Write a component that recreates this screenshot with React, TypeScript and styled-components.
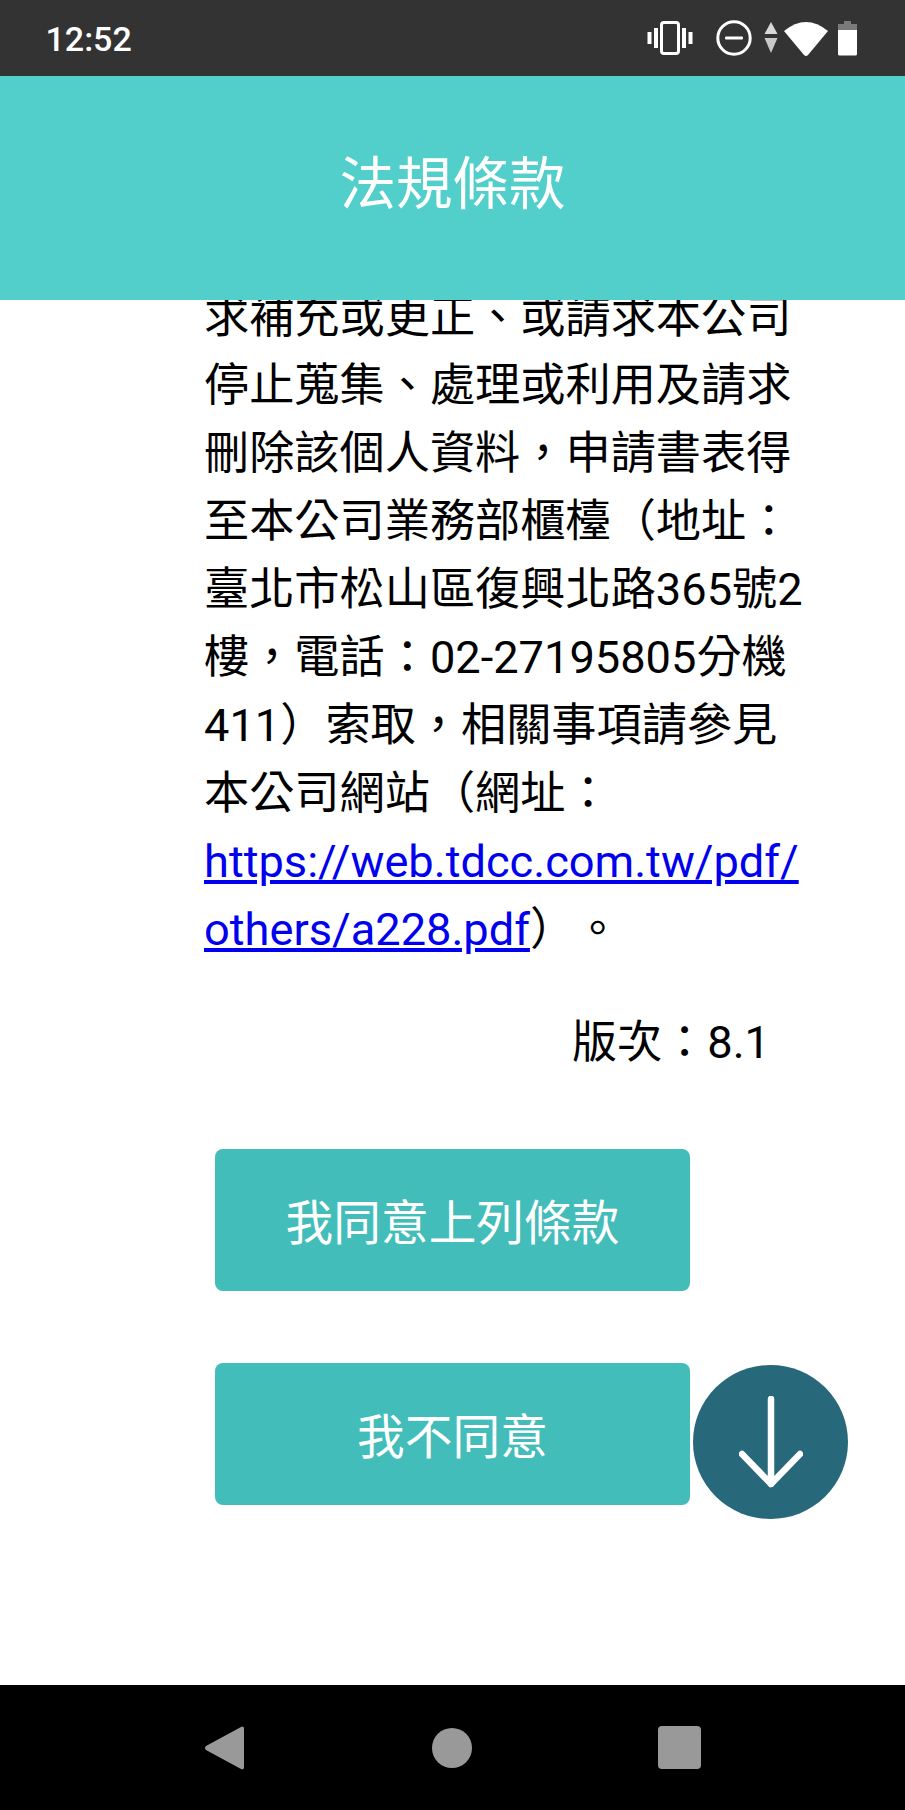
import React from "react";
import styled, { createGlobalStyle } from "styled-components";

const Global = createGlobalStyle`
  html, body { margin: 0; padding: 0; background: #fff; }
  body { font-family: Roboto, "Noto Sans CJK TC", sans-serif; }
`;

const Screen = styled.div`
  position: relative;
  width: 905px;
  height: 1810px;
  display: flex;
  flex-direction: column;
  overflow: hidden;
  background: #fff;
  text-spacing-trim: space-all;
`;

const StatusBar = styled.div`
  height: 76px;
  flex: none;
  display: flex;
  align-items: center;
  justify-content: space-between;
  padding: 0 47px 0 45.5px;
  background: #333333;
  color: #fff;
`;

const Clock = styled.span`
  font-size: 34px;
  font-weight: 500;
  line-height: 76px;
  padding-top: 1px;
`;

const StatusIcons = styled.div`
  display: flex;
  align-items: center;
`;

const StatusSvg = styled.svg<{ $gap?: number }>`
  display: block;
  margin-left: ${(p) => p.$gap ?? 0}px;
`;

const Header = styled.header`
  height: 224px;
  flex: none;
  display: flex;
  align-items: center;
  justify-content: center;
  padding-bottom: 18px;
  box-sizing: border-box;
  position: relative;
  z-index: 1;
  background: #53cfcb;
  color: #fff;
  font-size: 56.5px;
`;

const Main = styled.main`
  flex: 1;
  min-height: 0;
  overflow: hidden;
  padding-left: 204px;
`;

const Article = styled.div`
  width: 601px;
  margin-top: -16px;
  font-size: 45.2px;
  line-height: 68px;
  color: #000;
`;

const Paragraph = styled.p`
  margin: 0;
`;

const Link = styled.a`
  color: #0000ee;
  text-decoration: underline;
`;

const Version = styled.p`
  margin: 45px 35px 0 0;
  text-align: right;
`;

const Buttons = styled.div`
  margin-top: 72px;
  margin-left: 11px;
  display: flex;
  flex-direction: column;
  gap: 72px;
`;

const ActionButton = styled.button`
  width: 475px;
  height: 142px;
  padding: 0 0 2px;
  border: 0;
  border-radius: 8px;
  background: #43bdb9;
  color: #fff;
  font-family: inherit;
  font-size: 47.7px;
`;

const ScrollButton = styled.button`
  position: absolute;
  left: 693px;
  top: 1365px;
  width: 155px;
  height: 154px;
  padding: 0;
  border: 0;
  border-radius: 50%;
  background: #27697a;
  display: flex;
  align-items: center;
  justify-content: center;
`;

const NavBar = styled.nav`
  height: 125px;
  flex: none;
  display: grid;
  grid-template-columns: 204px 40px 188px 40px 186px 43px;
  align-items: center;
  background: #000;
`;

const NavBack = styled.svg`
  grid-column: 2;
  display: block;
`;

const NavHome = styled.span`
  grid-column: 4;
  width: 40px;
  height: 40px;
  border-radius: 50%;
  background: #999;
`;

const NavRecent = styled.span`
  grid-column: 6;
  width: 43px;
  height: 43px;
  border-radius: 4px;
  background: #999;
`;

export default function App() {
  return (
    <Screen lang="zh-TW">
      <Global />
      <StatusBar>
        <Clock>12:52</Clock>
        <StatusIcons>
          <StatusSvg width="46" height="34" viewBox="0 0 46 34">
            <rect x="0.5" y="11" width="4" height="12" fill="#fff" />
            <rect x="7" y="7" width="4" height="20" fill="#fff" />
            <rect x="35" y="7" width="4" height="20" fill="#fff" />
            <rect x="41.5" y="11" width="4" height="12" fill="#fff" />
            <rect x="14.5" y="1.5" width="17" height="31" rx="2.5" fill="none" stroke="#fff" strokeWidth="3" />
          </StatusSvg>
          <StatusSvg $gap={23} width="36" height="36" viewBox="0 0 36 36">
            <circle cx="18" cy="18" r="16.2" fill="none" stroke="#fff" strokeWidth="3" />
            <rect x="9" y="16.5" width="18" height="3" rx="1" fill="#fff" />
          </StatusSvg>
          <StatusSvg $gap={12} width="14" height="32" viewBox="0 0 14 32">
            <path d="M7 0 L13.5 12 H0.5 Z" fill="#d8d8d8" />
            <path d="M7 31 L13.5 16 H0.5 Z" fill="#c8c8c8" />
          </StatusSvg>
          <StatusSvg $gap={6} width="44" height="37" viewBox="0 0 44 37">
            <path d="M0 11 Q22 -7 44 11 L24 35 Q22 37 20 35 Z" fill="#fff" />
          </StatusSvg>
          <StatusSvg $gap={9} width="21" height="36" viewBox="0 0 21 36">
            <path d="M7 1 H14 V4 H20 V10 H1 V4 H7 Z" fill="#7a7a7a" />
            <path d="M1 10 H20 V34 Q20 35.5 18.5 35.5 H2.5 Q1 35.5 1 34 Z" fill="#fff" />
          </StatusSvg>
        </StatusIcons>
      </StatusBar>

      <Header>法規條款</Header>

      <Main>
        <Article>
          <Paragraph>
            求補充或更正、或請求本公司停止蒐集、處理或利用及請求刪除該個人資料，申請書表得至本公司業務部櫃檯（地址：臺北市松山區復興北路365號2樓，電話：02-27195805分機411）索取，相關事項請參見本公司網站（網址：
            <Link href="#">
              https://web.tdcc.com.tw/pdf/
              <wbr />
              others/a228.pdf
            </Link>
            ）。
          </Paragraph>
          <Version>版次：8.1</Version>
          <Buttons>
            <ActionButton>我同意上列條款</ActionButton>
            <ActionButton>我不同意</ActionButton>
          </Buttons>
        </Article>
      </Main>

      <ScrollButton aria-label="scroll down">
        <svg width="64" height="92" viewBox="0 0 64 92">
          <path
            d="M32 3 V88 M3 58 L32 88 L61 58"
            fill="none"
            stroke="#fff"
            strokeWidth="6.5"
            strokeLinecap="round"
            strokeLinejoin="round"
          />
        </svg>
      </ScrollButton>

      <NavBar>
        <NavBack width="40" height="46" viewBox="0 0 40 46">
          <path d="M37 2 Q40 0.5 40 4 V42 Q40 45.5 37 44 L2 25 Q0 23 2 21 Z" fill="#999" />
        </NavBack>
        <NavHome />
        <NavRecent />
      </NavBar>
    </Screen>
  );
}
